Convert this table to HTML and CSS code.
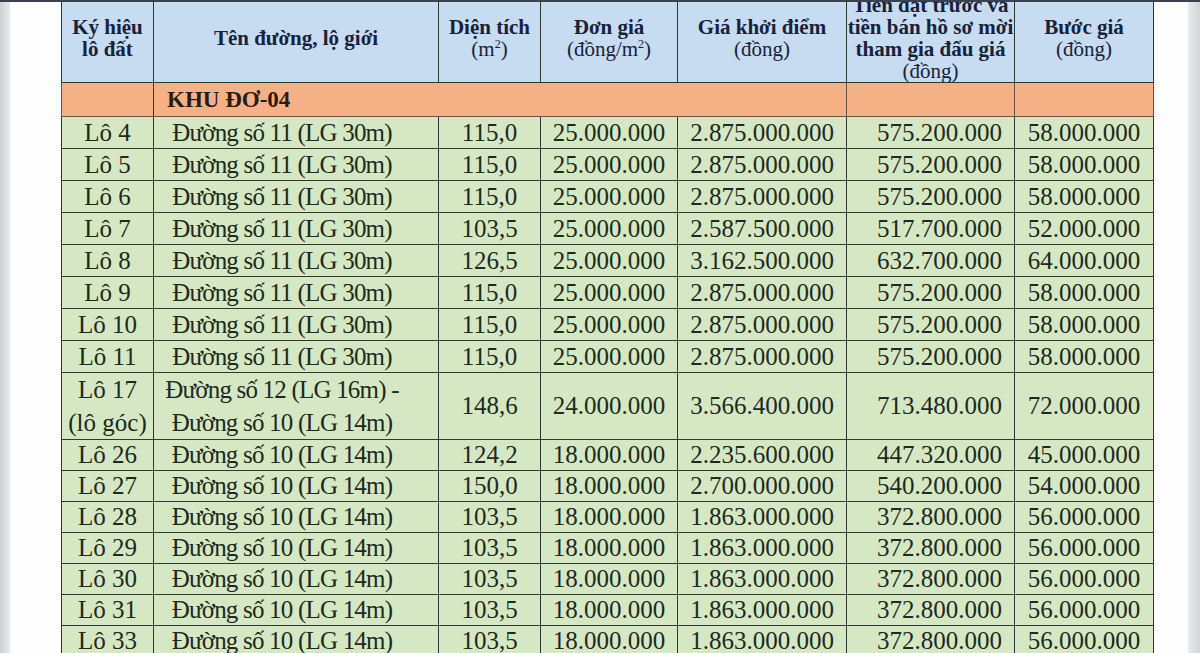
FILE: index.html
```html
<!DOCTYPE html>
<html lang="vi">
<head>
<meta charset="utf-8">
<title>Bảng giá lô đất</title>
<link rel="stylesheet" href="styles.css">
</head>
<body>
<div class="screen">
  <div class="edge edge-left"></div>
  <div class="sheet">
    <table class="lots">
      <colgroup>
        <col class="c-lot"><col class="c-road"><col class="c-area"><col class="c-unit"><col class="c-start"><col class="c-deposit"><col class="c-step">
      </colgroup>
      <thead>
        <tr class="head">
          <th>Ký hiệu<br>lô đất</th>
          <th>Tên đường, lộ giới</th>
          <th>Diện tích<br><span class="thin">(m<sup>2</sup>)</span></th>
          <th>Đơn giá<br><span class="thin">(đồng/m<sup>2</sup>)</span></th>
          <th>Giá khởi điểm<br><span class="thin">(đồng)</span></th>
          <th>Tiền đặt trước và<br>tiền bán hồ sơ mời<br>tham gia đấu giá<br><span class="thin">(đồng)</span></th>
          <th>Bước giá<br><span class="thin">(đồng)</span></th>
        </tr>
      </thead>
      <tbody>
        <tr class="zone">
          <td></td>
          <td colspan="3" class="zone-name">KHU ĐƠ-04</td>
          <td></td><td></td><td></td>
        </tr>
        <tr class="r32"><td>Lô 4</td><td class="road">Đường số 11 (LG 30m)</td><td>115,0</td><td>25.000.000</td><td>2.875.000.000</td><td class="dep">575.200.000</td><td>58.000.000</td></tr>
        <tr class="r32"><td>Lô 5</td><td class="road">Đường số 11 (LG 30m)</td><td>115,0</td><td>25.000.000</td><td>2.875.000.000</td><td class="dep">575.200.000</td><td>58.000.000</td></tr>
        <tr class="r32"><td>Lô 6</td><td class="road">Đường số 11 (LG 30m)</td><td>115,0</td><td>25.000.000</td><td>2.875.000.000</td><td class="dep">575.200.000</td><td>58.000.000</td></tr>
        <tr class="r32"><td>Lô 7</td><td class="road">Đường số 11 (LG 30m)</td><td>103,5</td><td>25.000.000</td><td>2.587.500.000</td><td class="dep">517.700.000</td><td>52.000.000</td></tr>
        <tr class="r32"><td>Lô 8</td><td class="road">Đường số 11 (LG 30m)</td><td>126,5</td><td>25.000.000</td><td>3.162.500.000</td><td class="dep">632.700.000</td><td>64.000.000</td></tr>
        <tr class="r32"><td>Lô 9</td><td class="road">Đường số 11 (LG 30m)</td><td>115,0</td><td>25.000.000</td><td>2.875.000.000</td><td class="dep">575.200.000</td><td>58.000.000</td></tr>
        <tr class="r32"><td>Lô 10</td><td class="road">Đường số 11 (LG 30m)</td><td>115,0</td><td>25.000.000</td><td>2.875.000.000</td><td class="dep">575.200.000</td><td>58.000.000</td></tr>
        <tr class="r32"><td>Lô 11</td><td class="road">Đường số 11 (LG 30m)</td><td>115,0</td><td>25.000.000</td><td>2.875.000.000</td><td class="dep">575.200.000</td><td>58.000.000</td></tr>
        <tr class="r66"><td class="two">Lô 17<br>(lô góc)</td><td class="two road">Đường số 12 (LG 16m) -<br>Đường số 10 (LG 14m)</td><td>148,6</td><td>24.000.000</td><td>3.566.400.000</td><td class="dep">713.480.000</td><td>72.000.000</td></tr>
        <tr class="r31"><td>Lô 26</td><td class="road">Đường số 10 (LG 14m)</td><td>124,2</td><td>18.000.000</td><td>2.235.600.000</td><td class="dep">447.320.000</td><td>45.000.000</td></tr>
        <tr class="r31"><td>Lô 27</td><td class="road">Đường số 10 (LG 14m)</td><td>150,0</td><td>18.000.000</td><td>2.700.000.000</td><td class="dep">540.200.000</td><td>54.000.000</td></tr>
        <tr class="r31"><td>Lô 28</td><td class="road">Đường số 10 (LG 14m)</td><td>103,5</td><td>18.000.000</td><td>1.863.000.000</td><td class="dep">372.800.000</td><td>56.000.000</td></tr>
        <tr class="r31"><td>Lô 29</td><td class="road">Đường số 10 (LG 14m)</td><td>103,5</td><td>18.000.000</td><td>1.863.000.000</td><td class="dep">372.800.000</td><td>56.000.000</td></tr>
        <tr class="r31"><td>Lô 30</td><td class="road">Đường số 10 (LG 14m)</td><td>103,5</td><td>18.000.000</td><td>1.863.000.000</td><td class="dep">372.800.000</td><td>56.000.000</td></tr>
        <tr class="r31"><td>Lô 31</td><td class="road">Đường số 10 (LG 14m)</td><td>103,5</td><td>18.000.000</td><td>1.863.000.000</td><td class="dep">372.800.000</td><td>56.000.000</td></tr>
        <tr class="r31"><td>Lô 33</td><td class="road">Đường số 10 (LG 14m)</td><td>103,5</td><td>18.000.000</td><td>1.863.000.000</td><td class="dep">372.800.000</td><td>56.000.000</td></tr>
      </tbody>
    </table>
  </div>
  <div class="edge edge-right"></div>
</div>
</body>
</html>
```
FILE: styles.css
```css
html, body {
  margin: 0;
  padding: 0;
  background: #ffffff;
}

.screen {
  display: flex;
  width: 1200px;
  height: 653px;
  box-sizing: border-box;
  border-top: 2px solid #3a4250;
  overflow: hidden;
}

.edge {
  flex: 0 0 auto;
}

.edge-left {
  width: 10px;
  background: linear-gradient(to right, #cfd0d2, #e9eaeb);
}

.edge-right {
  width: 12px;
  background: linear-gradient(to right, #e9eaeb, #d3d4d6);
}

.sheet {
  flex: 1 1 auto;
  background: #fdfdfd;
  padding-left: 51px;
  overflow: hidden;
}

.lots {
  width: 1092px;
  table-layout: fixed;
  border-collapse: collapse;
  margin-top: -10px;
  font-family: "Liberation Serif", "Times New Roman", serif;
  color: #1d2a1f;
}

.c-lot { width: 92px; }
.c-road { width: 285px; }
.c-area { width: 102px; }
.c-unit { width: 137px; }
.c-start { width: 169px; }
.c-deposit { width: 168px; }
.c-step { width: 139px; }

.lots th,
.lots td {
  border: 1px solid #2e382f;
  padding: 0;
  text-align: center;
  vertical-align: middle;
  white-space: nowrap;
  overflow: hidden;
}

.head {
  height: 90px;
  background: #c7dbf1;
}

.head th {
  font-size: 21px;
  line-height: 22px;
  font-weight: bold;
  color: #18223a;
}

.head .thin {
  font-weight: normal;
}

.head sup {
  font-size: 12px;
  line-height: 0;
  vertical-align: 8px;
}

.zone {
  height: 34px;
  background: #f5b185;
}

.zone td {
  border-color: #6a5444;
}

.zone .zone-name {
  text-align: left;
  padding-left: 13px;
  font-size: 23px;
  font-weight: bold;
  color: #2a1b14;
  border-right-color: #f5b185;
}

.zone td:first-child {
  border-right-color: #2e382f;
}

.r32, .r31, .r66 {
  background: #d5e8c3;
}

.r32 { height: 32px; }
.r31 { height: 31px; }
.r66 { height: 66px; }

.lots tbody td {
  font-size: 25px;
  line-height: 28px;
}

.lots td.road {
  letter-spacing: -0.8px;
  padding-right: 28px;
}

.lots td.two {
  line-height: 33px;
}

.lots td.dep {
  text-align: right;
  padding-right: 12px;
}
```
